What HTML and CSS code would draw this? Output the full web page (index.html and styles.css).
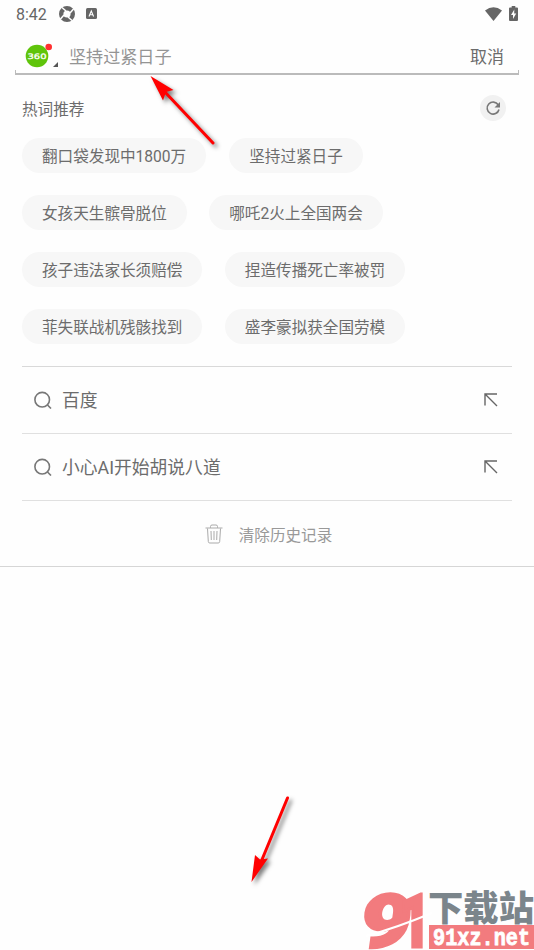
FILE: index.html
```html
<!DOCTYPE html>
<html lang="zh-CN">
<head>
<meta charset="utf-8">
<title>搜索</title>
<link rel="stylesheet" href="styles.css">
</head>
<body>
<div class="screen">
  <header class="status">
    <span class="time">8:42</span>
    <svg class="status-shutter" width="16" height="16" viewBox="0 0 16 16"><circle cx="8" cy="8" r="5.800" fill="none" stroke="#666" stroke-width="4.400"/><path d="M3 1.500l4 3.500M14.500 3l-3.500 4M13 14.500l-4-3.500M1.500 13l3.500-4" stroke="#fff" stroke-width="1.500"/></svg>
    <svg class="status-app" width="11" height="11" viewBox="0 0 11 11"><rect width="11" height="11" rx="1.5" fill="#666"/><path d="M3 8.5L5.3 3l2.3 5.5M3.8 6.8h3" fill="none" stroke="#fff" stroke-width="1.1"/></svg>
    <svg class="wifi" width="17" height="14" viewBox="0 0 17 14"><path d="M0 3.4Q8.5-3 17 3.4L8.5 14z" fill="#666"/></svg>
    <svg class="battery" width="9" height="15" viewBox="0 0 9 15"><path d="M2.7 0h3.6v1.5H8q1 0 1 1V14q0 1-1 1H1q-1 0-1-1V2.500q0-1 1-1h1.700z" fill="#666"/><path d="M5.300 3.500L2 9h2v4l3.200-5.500h-2z" fill="#fff"/></svg>
  </header>

  <div class="search">
    <svg class="engine" width="36" height="26" viewBox="0 0 36 26"><circle cx="12" cy="14" r="11.300" fill="#5fc40a"/><text class="engine-name" x="2.500" y="17" textLength="19" lengthAdjust="spacingAndGlyphs">360</text><circle cx="23.700" cy="5" r="3.300" fill="#ff3030"/><path d="M33 20v5h-5z" fill="#555"/></svg>
    <span class="query">坚持过紧日子</span>
    <span class="cancel">取消</span>
  </div>

  <section class="hot">
    <div class="hot-head">
      <h2>热词推荐</h2>
      <span class="refresh"><svg width="26" height="26" viewBox="0 0 26 26"><path d="M18.200 9.800A6 6 0 1 0 19 14.500" fill="none" stroke="#777" stroke-width="1.600"/><path d="M20 7v5.500h-5.500z" fill="#777"/></svg></span>
    </div>
    <div class="chips">
      <div class="chip-row"><span class="chip">翻口袋发现中1800万</span><span class="chip">坚持过紧日子</span></div>
      <div class="chip-row"><span class="chip">女孩天生髌骨脱位</span><span class="chip">哪吒2火上全国两会</span></div>
      <div class="chip-row"><span class="chip">孩子违法家长须赔偿</span><span class="chip">捏造传播死亡率被罚</span></div>
      <div class="chip-row"><span class="chip">菲失联战机残骸找到</span><span class="chip">盛李豪拟获全国劳模</span></div>
    </div>
  </section>

  <ul class="history">
    <li>
      <svg width="18" height="18" viewBox="0 0 18 18"><circle cx="8.200" cy="8.700" r="7.300"/><path d="M13.500 14l3.500 3.500"/></svg>
      <span>百度</span>
      <svg class="fill" width="14" height="14" viewBox="0 0 14 14"><path d="M1 12.500V1h12M1.500 1.500l11.500 11.500"/></svg>
    </li>
    <li>
      <svg width="18" height="18" viewBox="0 0 18 18"><circle cx="8.200" cy="8.700" r="7.300"/><path d="M13.500 14l3.500 3.500"/></svg>
      <span>小心AI开始胡说八道</span>
      <svg class="fill" width="14" height="14" viewBox="0 0 14 14"><path d="M1 12.500V1h12M1.500 1.500l11.500 11.500"/></svg>
    </li>
  </ul>
  <div class="clear">
    <svg width="18" height="20" viewBox="0 0 18 20"><path d="M.5 4h17M5.500 3.800V2.500q0-1.500 1.500-1.500h4q1.500 0 1.500 1.500v1.300M2.500 4.500l.8 13q.1 1.500 1.500 1.500h8.400q1.400 0 1.500-1.500l.8-13M6 7l.3 9M9 7v9M12 7l-.3 9"/></svg>
    <span>清除历史记录</span>
  </div>
</div>

<svg class="arrow arrow-top" width="80" height="85" viewBox="145 70 80 85"><path d="M213 143L164 91" stroke="#f00" stroke-width="3" stroke-linecap="round"/><path d="M150.500 76l23 14-7.500 2-3 8.500z" fill="#f00"/></svg>
<svg class="arrow arrow-bottom" width="60" height="100" viewBox="240 790 60 100"><path d="M287.500 798L261 862" stroke="#f00" stroke-width="3" stroke-linecap="round"/><path d="M251.500 882l3.500-27 5 4.500 8-1z" fill="#f00"/></svg>

<svg class="watermark" width="174" height="64" viewBox="360 886 174 64">
  <g class="mark-91">
    <text transform="translate(358 947) skewX(-8)" textLength="50" lengthAdjust="spacingAndGlyphs">9</text>
    <text transform="translate(399 947)" textLength="32" lengthAdjust="spacingAndGlyphs">1</text>
  </g>
  <path d="M366 936Q396 928 432 913" stroke="#fff" stroke-width="2" fill="none"/>
  <text class="mark-name" x="428" y="921" textLength="106" lengthAdjust="spacingAndGlyphs">下载站</text>
  <rect x="429" y="925" width="105" height="24" fill="#f27b7e"/>
  <text class="mark-url" x="433" y="945" textLength="97" lengthAdjust="spacingAndGlyphs">91xz.net</text>
</svg>
</body>
</html>
```
FILE: styles.css
```css
* { box-sizing: border-box; }
body {
  margin: 0;
  position: relative;
  width: 534px;
  height: 950px;
  overflow: hidden;
  background: #fefefe;
  color: #6c6c6c;
  font-family: Roboto, "Noto Sans CJK SC", sans-serif;
}
svg { display: block; flex: none; }
.screen { height: 567px; border-bottom: 1px solid #d6d6d6; }
.status { display: flex; align-items: center; height: 27px; padding: 0 16px; }
.time { width: 43px; font-size: 16px; color: #666; padding-top: 1px; }
.status-app { margin-left: 11px; }
.wifi { margin-left: auto; }
.battery { margin: 0 0 0 7px; }
.search {
  display: flex;
  align-items: center;
  height: 48px;
  margin: 0 15px;
  padding: 13px 15px 0 10px;
  background:
    linear-gradient(#bbb, #bbb) left bottom / 1px 5px no-repeat,
    linear-gradient(#bbb, #bbb) right bottom / 1px 5px no-repeat,
    linear-gradient(#bbb, #bbb) left bottom / 100% 2px no-repeat;
}
.engine { margin-top: -6px; }
.engine-name { font: 7.5px "DejaVu Sans", sans-serif; fill: #fff; stroke: #fff; stroke-width: .3px; }
.query { margin: -1px 0 0 8px; font-size: 17.1px; color: #949494; line-height: 24px; }
.cancel { margin: -1px 0 0 auto; font-size: 17px; line-height: 24px; }
.hot { padding: 20px 22px 0; }
.hot-head { display: flex; align-items: center; justify-content: space-between; height: 26px; padding-right: 6px; }
h2 { margin: 0; font-size: 15.6px; font-weight: 400; }
.refresh { width: 26px; height: 26px; border-radius: 50%; background: #f1f1f1; }
.chips { display: grid; gap: 22px; padding-top: 17px; }
.chip-row { display: flex; gap: 22.500px; }
.chip { height: 35px; padding: 0 20px; border-radius: 18px; background: #f7f7f7; font-size: 15.6px; line-height: 38px; white-space: nowrap; }
.chip-row:first-child { gap: 23px; }
.history { list-style: none; margin: 22px 22px 0; padding: 0; border-top: 1px solid #d9d9d9; }
.history li { display: flex; align-items: center; height: 67px; padding: 0 14px 0 12px; border-bottom: 1px solid #e0e0e0; font-size: 17.8px; }
.history svg { fill: none; stroke: #777; stroke-width: 1.6; }
.history span { margin: -2px 0 0 10px; }
.history .fill { margin-left: auto; stroke: #666; stroke-width: 1.4; }
.clear { display: flex; justify-content: center; align-items: center; gap: 16px; height: 66px; padding-left: 3px; font-size: 15.6px; color: #999; }
.clear svg { fill: none; stroke: #aaa; stroke-width: 1; }
.arrow { position: absolute; filter: drop-shadow(3px 3px 2px rgba(0, 0, 0, .5)); }
.arrow-top { left: 145px; top: 70px; }
.arrow-bottom { left: 240px; top: 790px; }
.watermark { position: absolute; left: 360px; top: 886px; }
.mark-91 { font: 900 74px Roboto, sans-serif; fill: #f27b7e; stroke: #f27b7e; stroke-width: 3px; }
.mark-name { font: 900 35px "Noto Sans CJK SC", sans-serif; fill: #7b858b; }
.mark-url { font: bold 24px "Liberation Mono", monospace; fill: #fff; stroke: #fff; stroke-width: .8px; }
```
